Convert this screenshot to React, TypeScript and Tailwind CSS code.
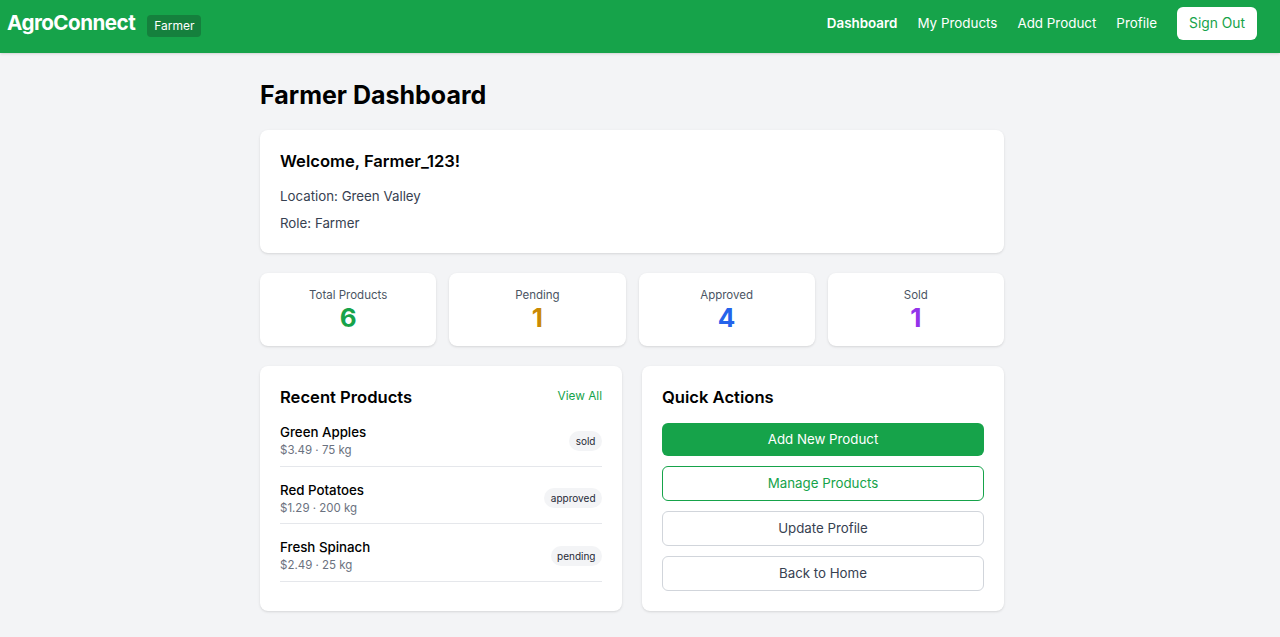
import React from "react";

const NAV = ["Dashboard", "My Products", "Add Product", "Profile"];

const STATS = [
  { label: "Total Products", value: 6, color: "text-[#16a34a]" },
  { label: "Pending", value: 1, color: "text-[#ca8a04]" },
  { label: "Approved", value: 4, color: "text-[#2563eb]" },
  { label: "Sold", value: 1, color: "text-[#9333ea]" },
];

const PRODUCTS = [
  { name: "Green Apples", price: "$3.49", qty: "75 kg", status: "sold" },
  { name: "Red Potatoes", price: "$1.29", qty: "200 kg", status: "approved" },
  { name: "Fresh Spinach", price: "$2.49", qty: "25 kg", status: "pending" },
];

export default function App() {
  return (
    <div
      className="min-h-[637px] bg-[#f3f4f6] text-[#111827]"
      style={{ fontFamily: "Inter, 'Noto Sans', sans-serif" }}
    >
      <header className="flex h-[53px] items-center justify-between bg-[#16a34a] pb-[6px] pl-[7px] pr-[23px] text-white shadow-sm">
        <div className="flex items-center gap-3">
          <span className="text-[20.6px] font-bold tracking-tight">AgroConnect</span>
          <span className="mt-[5px] rounded bg-[#15803d] px-[7px] py-[2px] text-[12px]">Farmer</span>
        </div>
        <nav className="flex items-center gap-5 text-[13.4px]">
          {NAV.map((n, i) => (
            <a key={n} className={i === 0 ? "font-semibold" : ""}>
              {n}
            </a>
          ))}
          <button className="h-[33px] w-[80px] rounded-md bg-white text-[13.8px] text-[#16a34a]">
            Sign Out
          </button>
        </nav>
      </header>

      <main className="pr-4">
        <div className="mx-auto w-[744px] pt-[24px] pb-6">
          <h1 className="text-[25px] font-bold leading-[36px] text-black">Farmer Dashboard</h1>

          <section className="mt-[17px] rounded-lg bg-white px-5 pt-5 pb-[19px] shadow">
            <h2 className="text-[16.6px] font-semibold leading-[22px] text-black">Welcome, Farmer_123!</h2>
            <p className="mt-[13px] text-[13.3px] leading-[22px] text-[#374151]">Location: Green Valley</p>
            <p className="mt-[5px] text-[13.3px] leading-[22px] text-[#374151]">Role: Farmer</p>
          </section>

          <div className="mt-5 grid grid-cols-4 gap-[13px]">
            {STATS.map((s) => (
              <div key={s.label} className="flex h-[73px] flex-col items-center rounded-lg bg-white pt-[14px] shadow">
                <span className="text-[11.5px] leading-[16px] text-[#4b5563]">{s.label}</span>
                <span className={`text-[26px] font-bold leading-[30px] ${s.color}`}>{s.value}</span>
              </div>
            ))}
          </div>

          <div className="mt-5 grid grid-cols-2 gap-5">
            <section className="rounded-lg bg-white px-5 pt-[20px] pb-[29px] shadow">
              <div className="flex items-center justify-between">
                <h2 className="text-[16.6px] font-semibold leading-[22px] text-black">Recent Products</h2>
                <a className="text-[11.8px] text-[#16a34a]">View All</a>
              </div>
              <ul className="mt-[1px]">
                {PRODUCTS.map((p) => (
                  <li
                    key={p.name}
                    className="flex items-center justify-between border-b border-[#e5e7eb] pt-[13px] pb-[6.5px]"
                  >
                    <div>
                      <p className="text-[13.3px] font-medium leading-[20px] text-black">{p.name}</p>
                      <p className="text-[11.5px] leading-[17px] text-[#6b7280]">
                        {p.price} · {p.qty}
                      </p>
                    </div>
                    <span className="rounded-full bg-[#f3f4f6] px-[6.5px] py-[3px] text-[10px] leading-[14px] text-[#1f2937]">
                      {p.status}
                    </span>
                  </li>
                ))}
              </ul>
            </section>

            <section className="rounded-lg bg-white px-5 pt-5 pb-[19px] shadow">
              <h2 className="text-[16.6px] font-semibold leading-[22px] text-black">Quick Actions</h2>
              <div className="mt-[15px] flex flex-col">
                <button className="h-[33px] rounded-md bg-[#16a34a] text-[13.3px] text-white">Add New Product</button>
                <button className="mt-[10px] h-[35px] rounded-md border border-[#16a34a] text-[13.3px] text-[#16a34a]">
                  Manage Products
                </button>
                <button className="mt-[10px] h-[35px] rounded-md border border-[#d1d5db] text-[13.3px] text-[#374151]">
                  Update Profile
                </button>
                <button className="mt-[10px] h-[35px] rounded-md border border-[#d1d5db] text-[13.3px] text-[#374151]">
                  Back to Home
                </button>
              </div>
            </section>
          </div>
        </div>
      </main>
    </div>
  );
}
